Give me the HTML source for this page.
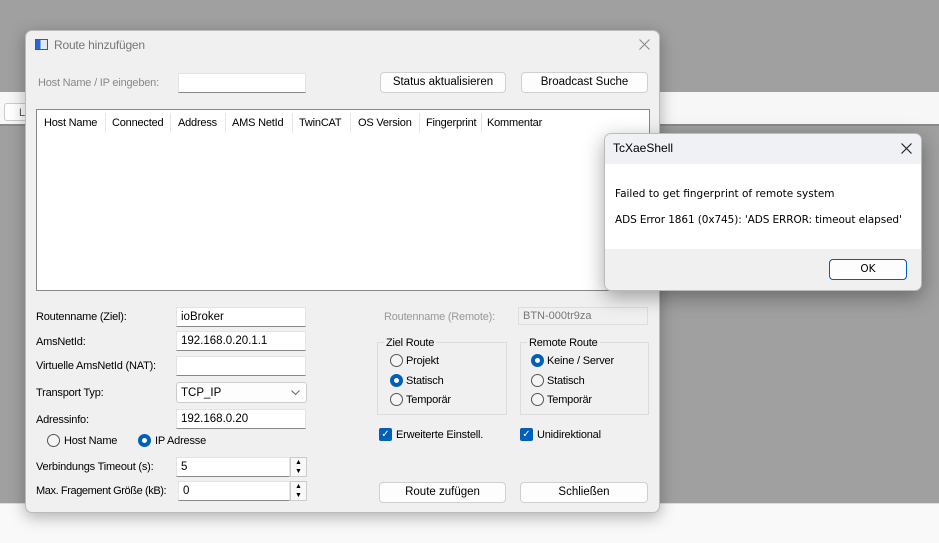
<!DOCTYPE html>
<html><head><meta charset="utf-8"><style>
*{box-sizing:border-box;margin:0;padding:0}
body{width:939px;height:543px;background:#a0a0a0;position:relative;overflow:hidden;font-family:"Liberation Sans",sans-serif;font-size:11px;color:#000}
.a{position:absolute}
.t{position:absolute;white-space:nowrap;line-height:14px;letter-spacing:-0.2px}
.inp{position:absolute;background:#fff;border:1px solid #e3e3e3;border-bottom:1px solid #888;height:20px;padding:2px 4px;line-height:14px;font-size:11.5px}
.btn{position:absolute;background:#fdfdfd;border:1px solid #d0d0d0;border-radius:4px;height:21px;text-align:center;line-height:19px;font-size:11.5px}
.rad{position:absolute;width:13px;height:13px;border:1px solid #555;border-radius:50%;background:#f5f5f5}
.rad.on{border:4px solid #005fb8;background:#fff}
.chk{position:absolute;width:13px;height:13px;background:#005fb8;border-radius:2px;color:#fff;font-size:10px;line-height:13px;text-align:center}
.grp{position:absolute;border:1px solid #dcdcdc}
.col{position:absolute;top:113px;height:20px;border-left:1px solid #e5e5e5}
</style></head><body>
<div class="a" style="left:0;top:92px;width:939px;height:34px;background:#f7f7f7;border-bottom:2px solid #8a8a8a"></div>
<div class="a" style="left:4px;top:103px;width:30px;height:18px;background:#fff;border:1px solid #ccc;border-radius:3px"></div>
<div class="t" style="left:19px;top:106px;color:#555">L</div>
<div class="a" style="left:0;top:503px;width:939px;height:40px;background:#f9f9f9;border-top:1px solid #ddd"></div>

<div class="a" style="left:25px;top:30px;width:635px;height:483px;background:#f0f0f0;border:1px solid #bbb;border-radius:7px;box-shadow:0 4px 16px rgba(0,0,0,.3)"></div>
<div class="a" style="left:35px;top:39px;width:13px;height:11px;border:1px solid #556;background:linear-gradient(90deg,#2a6ad0 40%,#e0e8f0 40%)"></div>
<div class="t" style="left:54px;top:38px;font-size:12px;color:#777">Route hinzufügen</div>
<svg class="a" style="left:639px;top:39px" width="11" height="11"><path d="M0.5 0.5L10.5 10.5M10.5 0.5L0.5 10.5" stroke="#888" stroke-width="1"/></svg>

<div class="t" style="left:38px;top:76px;color:#888">Host Name / IP eingeben:</div>
<div class="inp" style="left:178px;top:73px;width:128px"></div>
<div class="btn" style="left:380px;top:72px;width:126px">Status aktualisieren</div>
<div class="btn" style="left:521px;top:72px;width:127px">Broadcast Suche</div>

<div class="a" style="left:36px;top:109px;width:614px;height:182px;background:#fff;border:1px solid #888"></div>
<div class="t" style="left:44px;top:116px">Host Name</div>
<div class="col" style="left:105px"></div><div class="t" style="left:112px;top:116px">Connected</div>
<div class="col" style="left:170px"></div><div class="t" style="left:178px;top:116px">Address</div>
<div class="col" style="left:225px"></div><div class="t" style="left:232px;top:116px">AMS NetId</div>
<div class="col" style="left:292px"></div><div class="t" style="left:299px;top:116px">TwinCAT</div>
<div class="col" style="left:350px"></div><div class="t" style="left:358px;top:116px">OS Version</div>
<div class="col" style="left:419px"></div><div class="t" style="left:426px;top:116px">Fingerprint</div>
<div class="col" style="left:481px"></div><div class="t" style="left:487px;top:116px">Kommentar</div>

<div class="t" style="left:36px;top:310px">Routenname (Ziel):</div>
<div class="inp" style="left:176px;top:307px;width:130px">ioBroker</div>
<div class="t" style="left:36px;top:335px">AmsNetId:</div>
<div class="inp" style="left:176px;top:331px;width:130px">192.168.0.20.1.1</div>
<div class="t" style="left:36px;top:359px">Virtuelle AmsNetId (NAT):</div>
<div class="inp" style="left:176px;top:356px;width:130px"></div>
<div class="t" style="left:36px;top:386px">Transport Typ:</div>
<div class="a" style="left:176px;top:382px;width:131px;height:21px;background:#fdfdfd;border:1px solid #ccc;border-radius:3px;padding:3px 4px;line-height:14px;font-size:11.5px">TCP_IP<svg style="position:absolute;right:6px;top:7px" width="9" height="5"><path d="M0.5 0.5L4.5 4.5L8.5 0.5" fill="none" stroke="#666"/></svg></div>
<div class="t" style="left:36px;top:413px">Adressinfo:</div>
<div class="inp" style="left:176px;top:409px;width:130px">192.168.0.20</div>
<div class="rad" style="left:47px;top:434px"></div><div class="t" style="left:64px;top:434px">Host Name</div>
<div class="rad on" style="left:138px;top:434px"></div><div class="t" style="left:155px;top:434px">IP Adresse</div>
<div class="t" style="left:36px;top:460px">Verbindungs Timeout (s):</div>
<div class="inp" style="left:176px;top:457px;width:114px">5</div>
<div class="a" style="left:290px;top:457px;width:17px;height:20px;border:1px solid #ccc;background:#f8f8f8;font-size:7px;text-align:center;line-height:9px">▲<br>▼</div>
<div class="t" style="left:36px;top:484px;letter-spacing:-0.4px">Max. Fragement Größe (kB):</div>
<div class="inp" style="left:178px;top:481px;width:112px">0</div>
<div class="a" style="left:290px;top:481px;width:17px;height:20px;border:1px solid #ccc;background:#f8f8f8;font-size:7px;text-align:center;line-height:9px">▲<br>▼</div>

<div class="t" style="left:384px;top:310px;color:#999">Routenname (Remote):</div>
<div class="a" style="left:518px;top:307px;width:130px;height:18px;border:1px solid #ddd;color:#777;padding:1px 4px;line-height:14px">BTN-000tr9za</div>

<div class="grp" style="left:377px;top:342px;width:130px;height:73px"></div>
<div class="t" style="left:384px;top:336px;background:#f0f0f0;padding:0 2px">Ziel Route</div>
<div class="rad" style="left:390px;top:354px"></div><div class="t" style="left:406px;top:354px">Projekt</div>
<div class="rad on" style="left:390px;top:374px"></div><div class="t" style="left:406px;top:374px">Statisch</div>
<div class="rad" style="left:390px;top:393px"></div><div class="t" style="left:406px;top:393px">Temporär</div>

<div class="grp" style="left:520px;top:342px;width:129px;height:73px"></div>
<div class="t" style="left:527px;top:336px;background:#f0f0f0;padding:0 2px">Remote Route</div>
<div class="rad on" style="left:531px;top:354px"></div><div class="t" style="left:547px;top:354px">Keine / Server</div>
<div class="rad" style="left:531px;top:374px"></div><div class="t" style="left:547px;top:374px">Statisch</div>
<div class="rad" style="left:531px;top:393px"></div><div class="t" style="left:547px;top:393px">Temporär</div>

<div class="chk" style="left:379px;top:428px">✓</div><div class="t" style="left:396px;top:428px">Erweiterte Einstell.</div>
<div class="chk" style="left:520px;top:428px">✓</div><div class="t" style="left:537px;top:428px">Unidirektional</div>

<div class="btn" style="left:379px;top:482px;width:127px">Route zufügen</div>
<div class="btn" style="left:520px;top:482px;width:128px">Schließen</div>

<div class="a" style="left:604px;top:133px;width:318px;height:158px;background:#f0f0f0;border:1px solid #bbb;border-radius:7px;overflow:hidden;box-shadow:0 6px 20px rgba(0,0,0,.35)">
<div class="a" style="left:0;top:0;width:318px;height:30px;background:#eff1f4"></div>
<div class="a" style="left:0;top:30px;width:318px;height:85px;background:#fff"></div>
</div>
<div class="t" style="left:613px;top:141px;font-size:12px;letter-spacing:0">TcXaeShell</div>
<svg class="a" style="left:901px;top:143px" width="11" height="11"><path d="M0.5 0.5L10.5 10.5M10.5 0.5L0.5 10.5" stroke="#222" stroke-width="1.2"/></svg>
<div class="t" style="left:615px;top:187px;font-family:'DejaVu Sans',sans-serif;font-size:10.5px;letter-spacing:0">Failed to get fingerprint of remote system</div>
<div class="t" style="left:615px;top:213px;font-family:'DejaVu Sans',sans-serif;font-size:10.5px;letter-spacing:-0.1px">ADS Error 1861 (0x745): 'ADS ERROR: timeout elapsed'</div>
<div class="a" style="left:829px;top:259px;width:78px;height:21px;background:#fdfdfd;border:1px solid #005fb8;border-radius:4px;text-align:center;line-height:19px;font-family:'DejaVu Sans',sans-serif;font-size:10.5px">OK</div>
</body></html>
